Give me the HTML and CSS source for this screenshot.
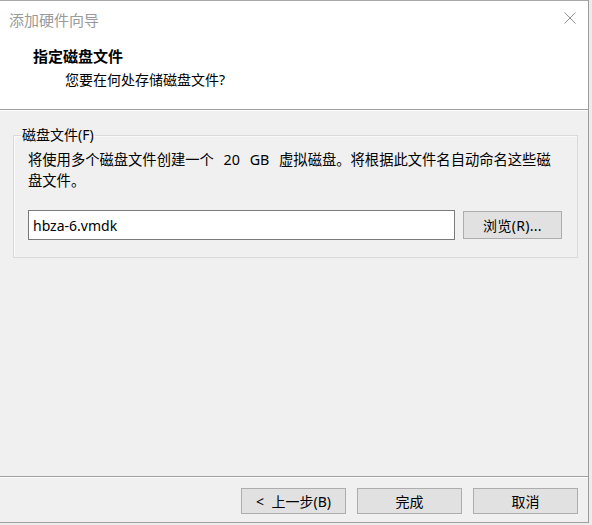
FILE: index.html
```html
<!DOCTYPE html>
<html lang="zh-CN">
<head>
<meta charset="utf-8">
<title>添加硬件向导</title>
<link rel="stylesheet" href="styles.css">
</head>
<body>
<div class="window">
  <div class="header">
    <div class="titlebar">
      <span class="title">添加硬件向导</span>
      <svg class="close" width="12" height="12" viewBox="0 0 12 12"><path d="M0.5 0.5 L11.5 11.5 M11.5 0.5 L0.5 11.5" stroke="#8f8f8f" stroke-width="1" fill="none"/></svg>
    </div>
    <div class="heading">指定磁盘文件</div>
    <div class="sub">您要在何处存储磁盘文件?</div>
  </div>
  <div class="content">
    <fieldset class="group">
      <legend class="legend">磁盘文件(F)</legend>
      <p class="desc">将使用多个磁盘文件创建一个 20 GB 虚拟磁盘。将根据此文件名自动命名这些磁盘文件。</p>
      <div class="filerow">
        <input class="fileinput" type="text" value="hbza-6.vmdk">
        <button class="btn browse" type="button">浏览(R)...</button>
      </div>
    </fieldset>
  </div>
  <div class="footer">
    <button class="btn nav" type="button">&lt; 上一步(B)</button>
    <button class="btn nav" type="button">完成</button>
    <button class="btn nav" type="button">取消</button>
  </div>
</div>
</body>
</html>
```
FILE: styles.css
```css
* { box-sizing: border-box; }
html, body {
  margin: 0;
  padding: 0;
  width: 592px;
  height: 525px;
  background: #ececec;
  overflow: hidden;
}
body {
  font-family: "Noto Sans", "Noto Sans CJK SC", sans-serif;
  font-size: 14px;
  color: #000;
}
.window {
  width: 589px;
  height: 523px;
  border-top: 1px solid #a8a8a8;
  border-right: 1px solid #9c9c9c;
  background: #f0f0f0;
  display: flex;
  flex-direction: column;
}
.header {
  height: 109px;
  background: #fff;
  border-bottom: 1px solid #a0a0a0;
  box-shadow: 0 1px 0 #fdfdfd;
  padding-top: 12px;
}
.titlebar {
  display: flex;
  justify-content: space-between;
  align-items: flex-start;
  padding: 0 12px 0 9px;
}
.title {
  font-size: 15px;
  line-height: 15px;
  color: #9a9a9a;
}
.close { margin-top: -1px; display: block; }
.heading {
  margin-top: 21px;
  padding-left: 33px;
  font-size: 15px;
  line-height: 15px;
  font-weight: bold;
}
.sub {
  margin-top: 9px;
  padding-left: 65px;
  font-size: 14px;
  line-height: 14px;
}
.content {
  flex: 1;
}
.group {
  margin: 16px 10px 0 13px;
  padding: 0 14px 17px 14px;
  border: 1px solid #d9d9d9;
  box-shadow: inset 1px 1px 0 #fafafa;
}
.legend {
  margin-left: -7px;
  padding: 0 1px;
  font-size: 14px;
  line-height: 18px;
}
.desc {
  margin: 5px 0 0 0;
  line-height: 21px;
  font-size: 14.3px;
  word-spacing: 6px;
  padding-right: 8px;
}
.filerow {
  margin-top: 19px;
  display: flex;
  align-items: center;
  gap: 8px;
}
.fileinput {
  width: 427px;
  height: 30px;
  border: 1px solid #7a7a7a;
  background: #fff;
  padding: 0 4px;
  font-family: "Noto Sans", "Noto Sans CJK SC", sans-serif;
  font-size: 14px;
  color: #000;
  outline: none;
}
.btn {
  background: #e1e1e1;
  border: 1px solid #adadad;
  font-family: "Noto Sans", "Noto Sans CJK SC", sans-serif;
  font-size: 14px;
  color: #000;
  padding: 0;
}
.browse {
  width: 99px;
  height: 28px;
  letter-spacing: 0.3px;
}
.footer {
  height: 47px;
  border-top: 1px solid #a0a0a0;
  border-bottom: 1px solid #a0a0a0;
  box-shadow: inset 0 1px 0 #fcfcfc;
  display: flex;
  justify-content: flex-end;
  align-items: flex-start;
  gap: 11px;
  padding: 11px 10px 0 0;
}
.nav {
  width: 105px;
  height: 26px;
  word-spacing: 4px;
}
```
